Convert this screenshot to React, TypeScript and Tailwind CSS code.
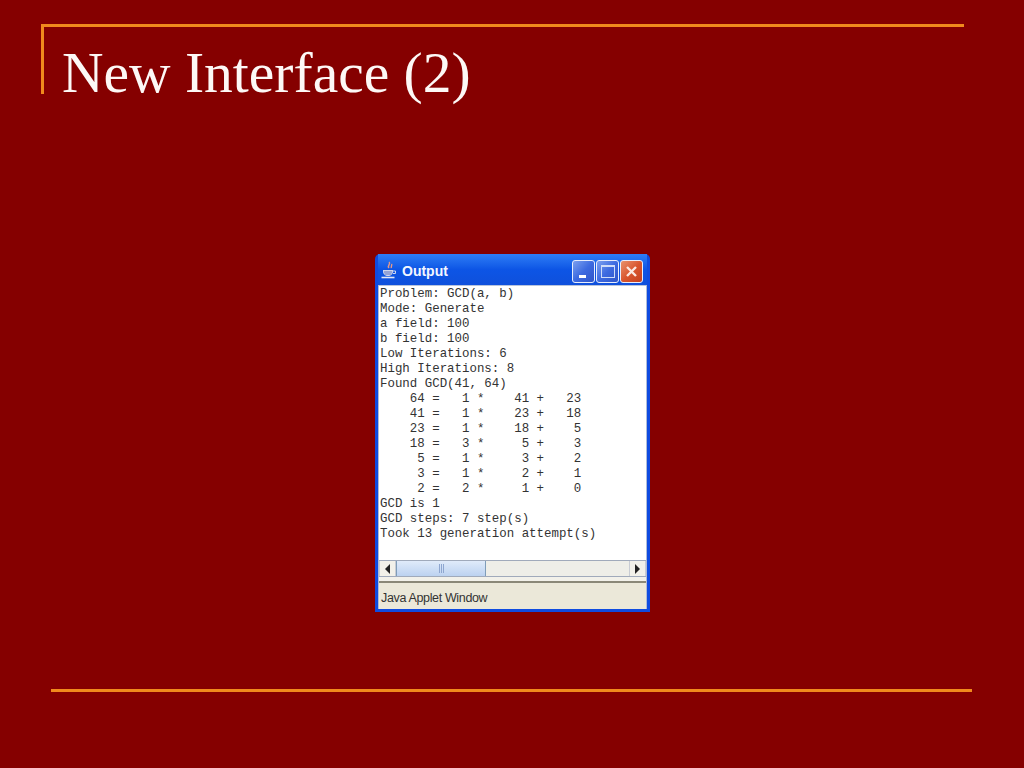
const outputLines = [
  'Problem: GCD(a, b)',
  'Mode: Generate',
  'a field: 100',
  'b field: 100',
  'Low Iterations: 6',
  'High Iterations: 8',
  'Found GCD(41, 64)',
  '    64 =   1 *    41 +   23',
  '    41 =   1 *    23 +   18',
  '    23 =   1 *    18 +    5',
  '    18 =   3 *     5 +    3',
  '     5 =   1 *     3 +    2',
  '     3 =   1 *     2 +    1',
  '     2 =   2 *     1 +    0',
  'GCD is 1',
  'GCD steps: 7 step(s)',
  'Took 13 generation attempt(s)',
];

const JavaIcon = () => (
  <svg width="18" height="20" viewBox="0 0 18 20" className="shrink-0">
    <path d="M9 1c2.500 2-2.500 3.500 0 6M11.500 3c1 1.500-1 2.500 0 4" fill="none" stroke="#e89a88" strokeWidth="1.400" />
    <path d="M3 9h10v1c0 3.500-2 5-5 5s-5-1.500-5-5z" fill="#cfd6ee" />
    <path d="M13 10h2.500v2.500H13" fill="none" stroke="#cfd6ee" strokeWidth="1" />
    <path d="M1.500 16.500h13" stroke="#e4e8f6" strokeWidth="1.600" />
    <path d="M4 11h8M4.500 13h7" stroke="#4f68b8" strokeWidth="0.900" />
  </svg>
);

const TitleButton = ({ children, red }: { children: React.ReactNode; red?: boolean }) => (
  <div
    className={`flex h-[23px] w-[23px] items-center justify-center rounded-[3px] border border-[#e8eefc] ${
      red
        ? 'bg-gradient-to-br from-[#e8916c] via-[#d9562e] to-[#c5401f]'
        : 'bg-gradient-to-br from-[#7d9fee] via-[#3d6ae0] to-[#2f55c8]'
    }`}
  >
    {children}
  </div>
);

const ScrollArrow = ({ dir }: { dir: 'left' | 'right' }) => (
  <div className="flex h-full w-[17px] shrink-0 items-center justify-center border-x border-[#c8ccd4] bg-[#f2f1ea]">
    <svg width="7" height="10" viewBox="0 0 7 10">
      <path d={dir === 'left' ? 'M6 0v10L1 5z' : 'M1 0v10l5-5z'} fill="#222" />
    </svg>
  </div>
);

const App = () => {
  return (
    <div className="flex h-[768px] w-[1024px] flex-col overflow-hidden bg-[#850000] pl-[41px] pt-[24px]">
      <div className="mr-[60px] h-[70px] border-l-[3px] border-t-[3px] border-[#f08a1d] pl-[18px]">
        <h1 className="mt-[15px] whitespace-nowrap font-['Liberation_Serif',serif] text-[57.500px] leading-[62px] text-[#fdf8f6]">
          New Interface (2)
        </h1>
      </div>

      <div className="ml-[334px] mt-[160px] flex h-[358px] w-[275px] flex-col rounded-t-[5px] border-x-[3px] border-b-[3px] border-[#0f4be0] bg-[#0f4be0]">
        <div className="flex h-[31px] shrink-0 items-center bg-gradient-to-b from-[#2f7df5] via-[#0d55e5] to-[#0f50dc] pl-[2px] pr-[4px] pt-[3px]">
          <JavaIcon />
          <span className="ml-[4px] font-['Liberation_Sans',sans-serif] text-[14px] font-bold text-[#f4f7ff]">Output</span>
          <div className="ml-auto flex gap-[1px]">
            <TitleButton>
              <span className="mr-[3px] mt-[11px] h-[3px] w-[7px] bg-white" />
            </TitleButton>
            <TitleButton>
              <span className="h-[13px] w-[14px] border border-t-[2px] border-[#cfdcf8]" />
            </TitleButton>
            <TitleButton red>
              <svg width="13" height="13" viewBox="0 0 13 13">
                <path d="M2 2l9 9M11 2l-9 9" stroke="#fbe8e0" strokeWidth="2.400" />
              </svg>
            </TitleButton>
          </div>
        </div>

        <div className="flex min-h-0 flex-1 flex-col border-x border-[#aebbd8] bg-white">
          <div className="h-[275px] shrink-0 overflow-hidden border-t border-[#b8c4dc] pl-[1px] pt-[1px] font-['Liberation_Mono',monospace] text-[12.430px] leading-[15px] text-[#333]">
            {outputLines.map((line) => (
              <div key={line} className="h-[15px] whitespace-pre">
                {line}
              </div>
            ))}
          </div>

          <div className="flex h-[17px] shrink-0 items-center border-y border-[#a0aabb] bg-[#eeeee8]">
            <ScrollArrow dir="left" />
            <div className="flex h-full w-[90px] items-center justify-center gap-[1px] border-x border-[#7f9db9] bg-gradient-to-b from-[#e0ebfa] to-[#bcd2f0]">
              <span className="h-[9px] w-[1px] bg-[#8ea6d0]" />
              <span className="h-[9px] w-[1px] bg-[#8ea6d0]" />
              <span className="h-[9px] w-[1px] bg-[#8ea6d0]" />
            </div>
            <div className="flex-1" />
            <ScrollArrow dir="right" />
          </div>

          <div className="h-[4px] shrink-0 bg-[#f2f1ea]" />
          <div className="flex flex-1 items-end border-t-2 border-[#8a8878] bg-[#ebe8d9] pb-[3px] pl-[2px] font-['Liberation_Sans',sans-serif] text-[12.500px] leading-[15px] tracking-[-0.350px] text-[#333]">
            Java Applet Window
          </div>
        </div>
      </div>

      <div className="ml-[10px] mt-[77px] h-[3px] w-[921px] bg-[#f08a1d]" />
    </div>
  );
};

export default App;
